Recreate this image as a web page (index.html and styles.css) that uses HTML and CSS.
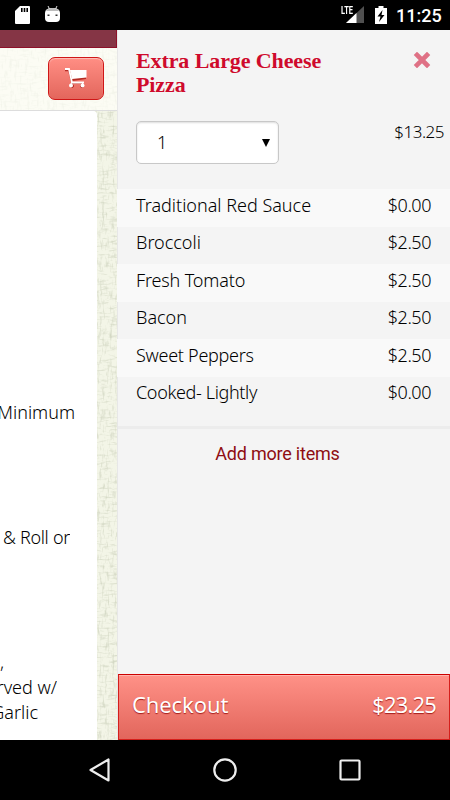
FILE: index.html
```
<!DOCTYPE html>
<html lang="en">
<head>
<meta charset="utf-8">
<meta name="viewport" content="width=device-width">
<title>Your order</title>
<link rel="stylesheet" href="styles.css">
</head>
<body>
<div class="status">
  <div class="status-group">
    <svg width="15" height="18" viewBox="0 0 15 18"><path d="M5 0h9a1 1 0 0 1 1 1v16a1 1 0 0 1-1 1H1a1 1 0 0 1-1-1V5z" fill="#fff"/><path d="M6 2h1.600v4H6zM8.700 2h1.600v4H8.700zM11.400 2H13v4h-1.600z" fill="#000"/></svg>
    <svg class="droid" width="15" height="18" viewBox="0 0 15 18"><path d="M3 1l2 4M12 1l-2 4" stroke="#ddd" stroke-width="1"/><path d="M0 8q0-5 7.500-5T15 8v5q0 4-4 4H4q-4 0-4-4z" fill="#fff"/><path d="M1 6q1-3 6.500-3T14 6z" fill="#bbb"/><path d="M2.500 9.500h2v1.500h-2zM10.500 9.500h2v1.500h-2z" fill="#333"/></svg>
  </div>
  <div class="status-group">
    <span class="lte">LTE</span>
    <svg class="signal" width="18" height="17" viewBox="0 0 18 17"><path d="M0 17L18 0v17z" fill="#505050"/><path d="M0 17L10.500 7v10z" fill="#fff"/></svg>
    <svg class="battery" width="12" height="18" viewBox="0 0 12 18"><path d="M3.500 0h5v2H12v16H0V2h3.500z" fill="#fff"/><path d="M7.500 4L2.500 10.500h3L4 16l5.500-7H6.500z" fill="#000"/></svg>
    <span class="clock">11:25</span>
  </div>
</div>
<main class="app">
  <section class="page">
    <svg class="texture" width="117" height="710">
      <filter id="weave-v" x="0" y="0" width="100%" height="100%"><feTurbulence type="fractalNoise" baseFrequency=".4 .1" numOctaves="3" seed="4"/><feColorMatrix values="0 0 0 0 .48  0 0 0 0 .52  0 0 0 0 .38  2.200 0 0 0 -1.150"/></filter>
      <filter id="weave-h" x="0" y="0" width="100%" height="100%"><feTurbulence type="fractalNoise" baseFrequency=".1 .45" numOctaves="3" seed="9"/><feColorMatrix values="0 0 0 0 .48  0 0 0 0 .52  0 0 0 0 .38  2 0 0 0 -1.050"/></filter>
      <rect width="117" height="710" filter="url(#weave-v)"/>
      <rect width="117" height="710" filter="url(#weave-h)"/>
    </svg>
    <div class="topbar"></div>
    <div class="header">
      <div class="cart">
        <svg width="24" height="21" viewBox="0 0 24 21"><g transform="translate(0 1)" fill="#b52c25" stroke="#b52c25"><path d="M6.500 3H22v7L8 12z" stroke="none"/><path d="M1 1.500h4L8 14h11" fill="none" stroke-width="1.700"/><circle cx="8" cy="17" r="1.500"/><circle cx="18" cy="17" r="1.500"/></g><path d="M6 2h16.500v7.500L8 11z" fill="#fff"/><path d="M1 1h4l3 13.500h12" fill="none" stroke="#fff" stroke-width="1.800"/><path d="M8 14l-1.500 3M18.500 14v3" stroke="#fff"/><circle cx="7" cy="17.500" r="2" fill="#fff"/><circle cx="18.500" cy="17.500" r="2" fill="#fff"/></svg>
      </div>
    </div>
    <div class="copy">
      <p class="line minimum">Minimum</p>
      <p class="line roll">&amp; Roll or</p>
      <p class="line comma">,</p>
      <p class="line served">rved w/</p>
      <p class="line garlic">Garlic</p>
    </div>
  </section>
  <aside class="panel">
    <div class="item">
      <div class="item-head">
        <h1>Extra Large Cheese<br>Pizza</h1>
        <svg class="close" width="18" height="16" viewBox="0 0 18 16"><path d="M4 3l10 10M14 3L4 13" stroke="#df7185" stroke-width="4.600" stroke-linecap="square"/></svg>
      </div>
      <div class="quantity">
        <div class="select"><span>1</span><svg width="8" height="8" viewBox="0 0 8 8"><path d="M0 0h8L4 8z"/></svg></div>
        <span class="price">$13.25</span>
      </div>
    </div>
    <ul class="options">
      <li><span>Traditional Red Sauce</span><span class="amount">$0.00</span></li>
      <li><span>Broccoli</span><span class="amount">$2.50</span></li>
      <li><span class="tomato">Fresh Tomato</span><span class="amount">$2.50</span></li>
      <li><span>Bacon</span><span class="amount">$2.50</span></li>
      <li><span class="peppers">Sweet Peppers</span><span class="amount">$2.50</span></li>
      <li><span class="cooked">Cooked- Lightly</span><span class="amount">$0.00</span></li>
    </ul>
    <div class="more">Add more items</div>
    <div class="checkout"><span class="checkout-label">Checkout</span><span class="total">$23.25</span></div>
  </aside>
</main>
<nav class="navbar">
  <svg width="24" height="26" viewBox="0 0 24 26"><path d="M20.500 2.500v21L2.500 13z" fill="none" stroke="#eee" stroke-width="2.200" stroke-linejoin="round"/></svg>
  <svg width="24" height="24" viewBox="0 0 24 24"><circle cx="12" cy="12" r="10.700" fill="none" stroke="#eee" stroke-width="2.200"/></svg>
  <svg width="24" height="24" viewBox="0 0 24 24"><rect x="2.500" y="2.500" width="19" height="19" rx="1" fill="none" stroke="#eee" stroke-width="2.200"/></svg>
</nav>
</body>
</html>
```
FILE: styles.css
```
* { box-sizing: border-box; }
body { margin: 0; width: 450px; height: 800px; overflow: hidden; background: #000; color: #000; font: 300 18px/25px "Noto Sans", sans-serif; }
svg { display: block; flex: none; }
h1, p, ul { margin: 0; padding: 0; }
span { white-space: nowrap; }

.status { height: 30px; display: flex; justify-content: space-between; padding: 0 9px 0 15px; color: #fff; }
.status-group { display: flex; align-items: flex-start; padding-top: 6px; }
.droid { margin: -1px 0 0 15px; }
.lte { width: 12px; transform: scaleX(.68); transform-origin: 0 0; font: 700 11px/9px Roboto, sans-serif; margin-right: -7px; }
.signal { margin-left: 0; }
.battery { margin: 0 9px 0 11px; }
.clock { font: 500 18px/20px Roboto, sans-serif; width: 45px; }

.app { height: 710px; display: flex; }
.page { position: relative; width: 117px; display: flex; flex-direction: column; overflow: hidden; background: #f3f5e7; }
.texture { position: absolute; left: 0; top: 0; opacity: .6; }
.topbar { position: relative; height: 18px; background: #853545; border: solid #8e1029; border-width: 0 1px 1px 0; }
.header { position: relative; height: 63px; padding: 9px 13px 0 0; display: flex; justify-content: flex-end; align-items: flex-start; background: rgba(255,255,250,.7); border-bottom: 1px solid #ddd; }
.cart { width: 56px; height: 43px; display: flex; align-items: center; justify-content: center; border: 1px solid #cf1717; border-radius: 7px; background: linear-gradient(#ff8e84, #e3665c); box-shadow: inset 0 1px 1px #ffc0ba; }
.copy { position: relative; width: 97px; flex: 1; padding-top: 289px; background: #fff; border-radius: 0 4px 0 0; }
.line { height: 25px; display: flex; justify-content: flex-end; white-space: nowrap; overflow: hidden; }
.minimum { width: 75px; }
.roll { width: 70px; margin-top: 100px; letter-spacing: -.3px; }
.comma { width: 4px; margin-top: 100px; }
.served { width: 57px; }
.garlic { width: 38px; }

.panel { width: 333px; display: flex; flex-direction: column; background: #f4f4f4; box-shadow: inset 1px 0 #e7e7e7; }
.item { height: 159px; padding: 19px 6px 0 19px; }
.item-head { display: flex; justify-content: space-between; height: 72px; }
h1 { color: #cf0a2c; font: 700 22px/24px "Liberation Serif", serif; letter-spacing: -.1px; }
.close { margin: 3px 13px 0 0; }
.quantity { display: flex; justify-content: space-between; align-items: flex-start; }
.select { width: 143px; height: 43px; padding: 0 8px 0 20px; display: flex; align-items: center; justify-content: space-between; border: 1px solid #c8c8c8; border-radius: 5px; background: #fff; box-shadow: inset 0 1px 2px #ddd; }
.select span { margin-top: -1px; }
.price { line-height: 21px; font-size: 17px; letter-spacing: -.5px; }
.options { list-style: none; }
.options li { height: 37.5px; padding: 3.5px 19px 0 19px; display: flex; justify-content: space-between; }
.options li:nth-child(odd) { background: #f9f9f9; }
.amount { letter-spacing: -.45px; }
.tomato { letter-spacing: -.15px; }
.peppers { letter-spacing: -.28px; }
.cooked { letter-spacing: -.35px; }
.more { margin: 12px 0 0 1px; height: 50px; padding: 12px 13px 0 0; border-top: 3px solid #ececec; text-align: center; color: #8f0d12; font: 400 18px/25px Roboto, sans-serif; letter-spacing: -.22px; }
.checkout { margin: auto 0 0 1px; height: 66px; padding: 0 13px; display: flex; justify-content: space-between; align-items: center; border: 1px solid #d51f1b; border-top-color: #cc0000; background: linear-gradient(#ff9187, #e2665c); box-shadow: inset 0 1px #ffb4ad; color: #fff; font-size: 22px; font-weight: 400; text-shadow: 0 1px 1px #a51c18; }
.checkout span { margin-top: -5px; }
.checkout-label { letter-spacing: -.1px; }
.total { letter-spacing: -.85px; }
.navbar { height: 60px; display: flex; justify-content: space-between; align-items: center; padding: 0 88px; }
```
